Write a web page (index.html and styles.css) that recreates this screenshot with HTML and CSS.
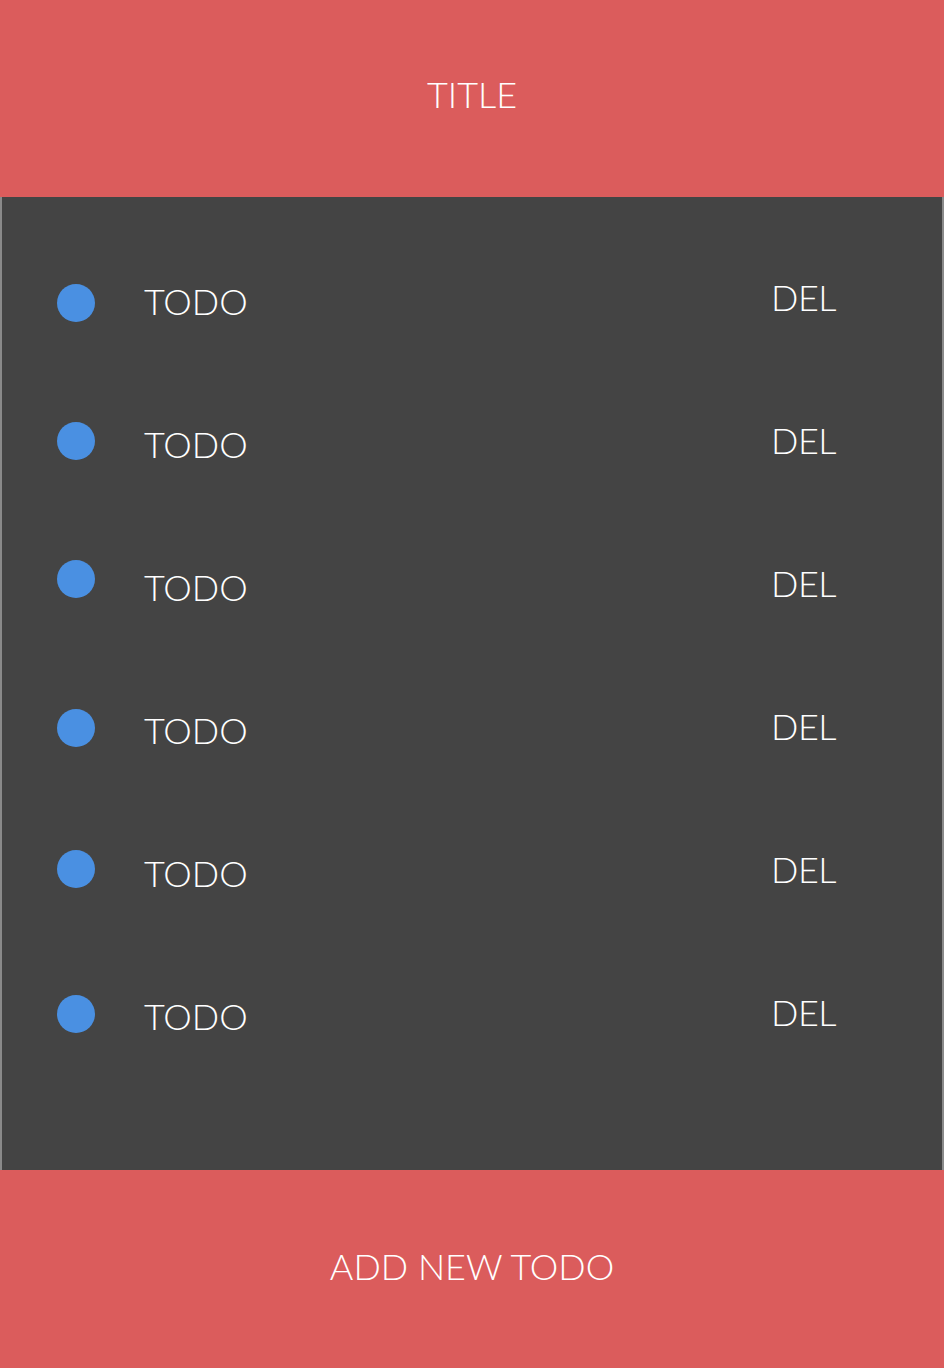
FILE: index.html
```html
<!DOCTYPE html>
<html lang="en">
<head>
<meta charset="utf-8">
<title>Todo</title>
<link rel="stylesheet" href="styles.css">
</head>
<body>
<div class="app">
  <header class="header"><span class="title">TITLE</span></header>
  <main class="panel">
    <ul class="list">
      <li class="row"><span class="dot"></span><span class="label">TODO</span><span class="del">DEL</span></li>
      <li class="row"><span class="dot"></span><span class="label">TODO</span><span class="del">DEL</span></li>
      <li class="row"><span class="dot"></span><span class="label">TODO</span><span class="del">DEL</span></li>
      <li class="row"><span class="dot"></span><span class="label">TODO</span><span class="del">DEL</span></li>
      <li class="row"><span class="dot"></span><span class="label">TODO</span><span class="del">DEL</span></li>
      <li class="row"><span class="dot"></span><span class="label">TODO</span><span class="del">DEL</span></li>
    </ul>
  </main>
  <footer class="footer"><span class="add">ADD NEW TODO</span></footer>
</div>
</body>
</html>
```
FILE: styles.css
```css
html, body {
  margin: 0;
  padding: 0;
}
body {
  font-family: Lato, "Open Sans", "Liberation Sans", sans-serif;
  font-weight: 300;
  color: #ffffff;
  background: #444444;
}
.app {
  display: flex;
  flex-direction: column;
  width: 944px;
  height: 1368px;
}
.header {
  box-sizing: border-box;
  height: 197px;
  padding-top: 73px;
  background: #db5c5c;
  display: flex;
  justify-content: center;
  align-items: flex-start;
}
.title, .add, .label, .del {
  font-size: 36px;
  line-height: 43px;
}
.panel {
  box-sizing: border-box;
  height: 973px;
  background: #444444;
  border-left: 2px solid #8a8a8a;
  border-right: 2px solid #8a8a8a;
  padding-top: 79px;
}
.list {
  list-style: none;
  margin: 0;
  padding: 0;
}
.row {
  box-sizing: border-box;
  height: 143px;
  display: flex;
  align-items: flex-start;
  padding-left: 55px;
}
.dot {
  flex: none;
  width: 38px;
  height: 38px;
  border-radius: 50%;
  background: #4a90e2;
  margin-top: 8px;
}
.row:nth-child(2) .dot { margin-top: 3px; }
.row:nth-child(3) .dot { margin-top: -2px; }
.row:nth-child(4) .dot { margin-top: 4px; }
.row:nth-child(5) .dot { margin-top: 2px; }
.row:nth-child(6) .dot { margin-top: 4px; }
.label {
  margin-left: 49px;
  padding-top: 4px;
}
.del {
  margin-left: auto;
  margin-right: 106px;
  letter-spacing: -0.5px;
}
.footer {
  box-sizing: border-box;
  height: 198px;
  padding-top: 75px;
  background: #db5c5c;
  display: flex;
  justify-content: center;
  align-items: flex-start;
}
```
